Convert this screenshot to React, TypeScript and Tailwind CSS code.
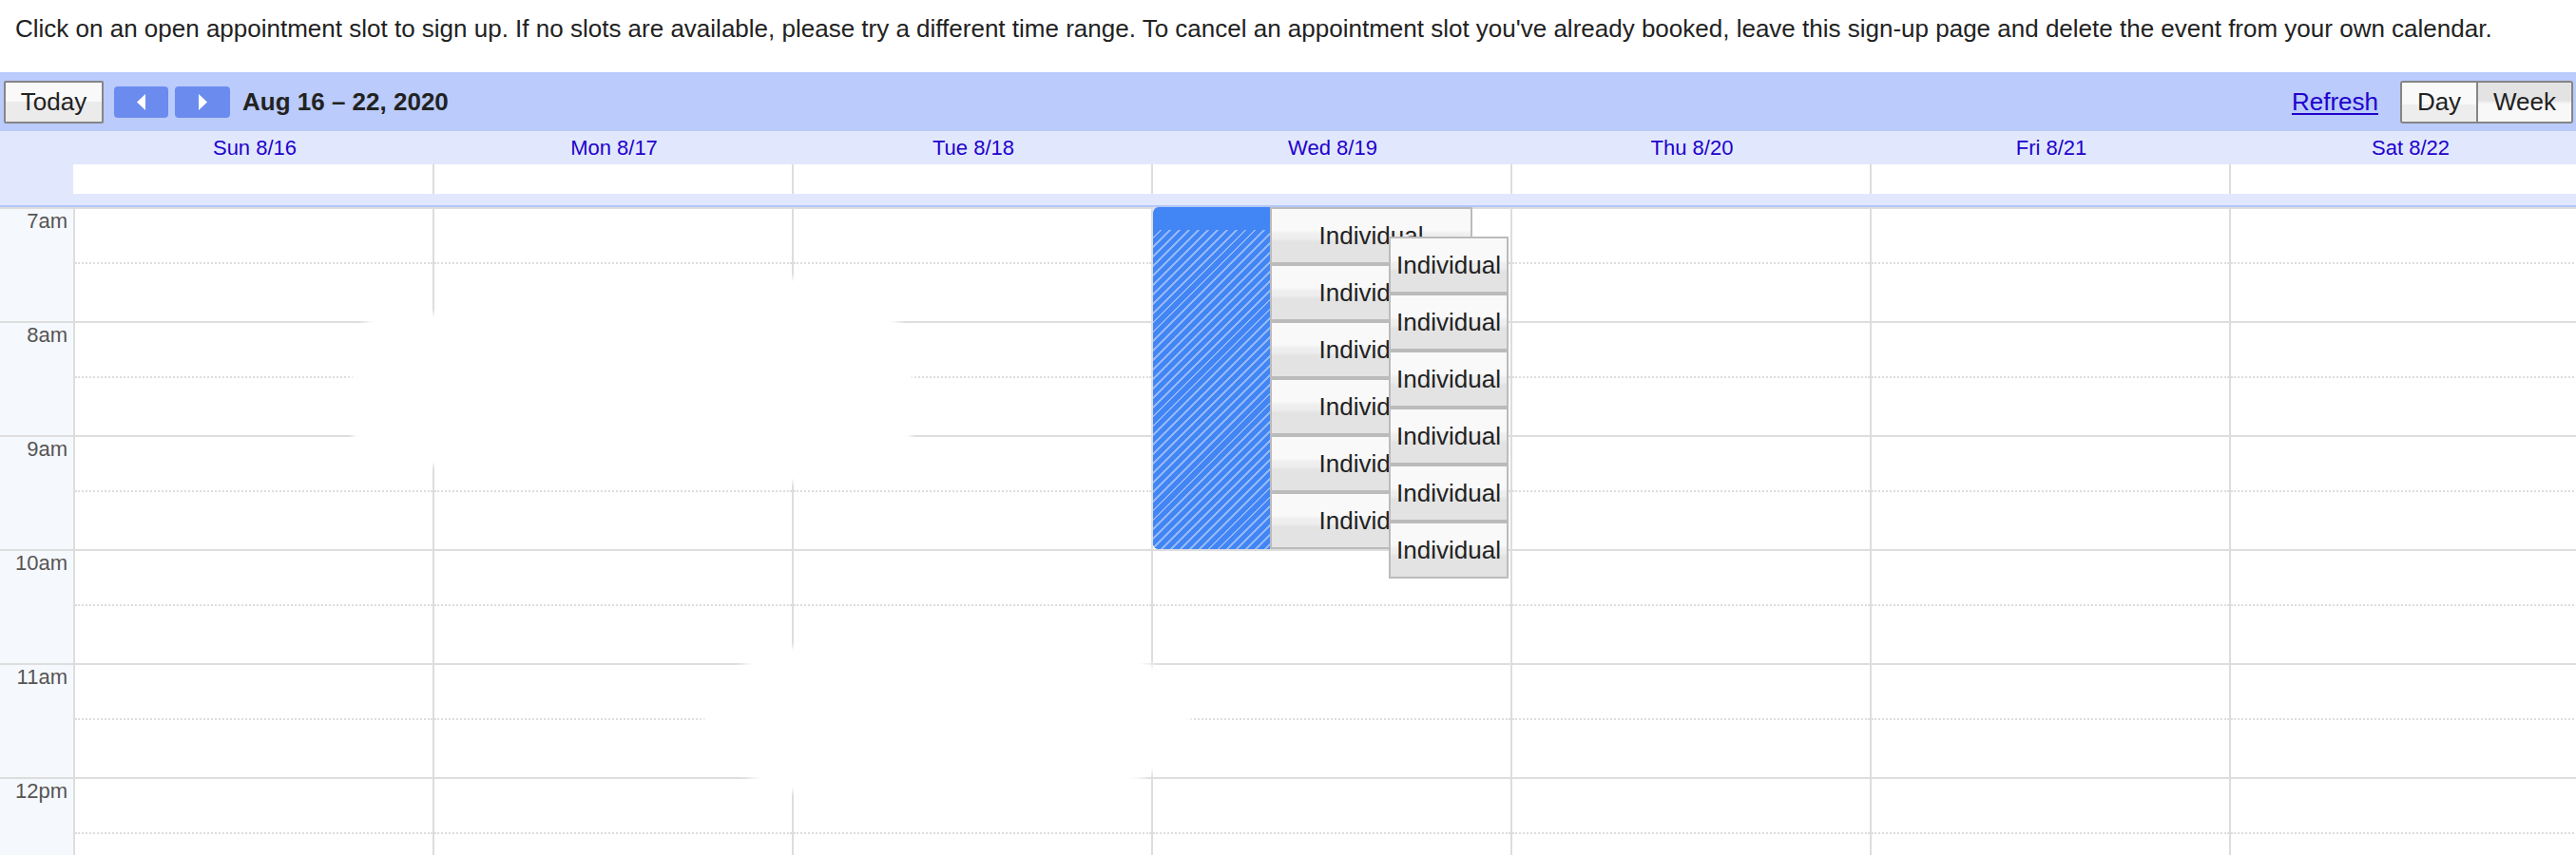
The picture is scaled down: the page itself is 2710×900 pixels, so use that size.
import React from "react";

const hours = ["7am", "8am", "9am", "10am", "11am", "12pm"];
const days = ["Sun 8/16", "Mon 8/17", "Tue 8/18", "Wed 8/19", "Thu 8/20", "Fri 8/21", "Sat 8/22"];

function SlotButton({ w }: { w: string }) {
  return (
    <div
      className={`${w} flex h-[60px] shrink-0 items-center justify-center overflow-hidden whitespace-nowrap border-2 border-[#bbbbbb] bg-[linear-gradient(#f9f9f9_0%,#f9f9f9_40%,#eeeeee_48%,#eeeeee_55%,#e3e3e3_62%,#e3e3e3_100%)] text-[26px] leading-[30px] text-[#222]`}
    >
      Individual
    </div>
  );
}

function DayColumn({ index }: { index: number }) {
  return (
    <div className="relative border-r-2 border-[#dddddd]">
      {hours.map((h) => (
        <div key={h} className="h-[120px] border-t-2 border-[#dddddd]">
          <div className="h-[58px] border-b-2 border-dotted border-[#dddddd]" />
        </div>
      ))}
      {index === 3 && (
        <>
          <div className="absolute left-0 top-0 flex h-[360px] w-[123px] flex-col overflow-hidden rounded-l-[6px] bg-[#4285f4]">
            <div className="h-[24px] shrink-0" />
            <div className="flex-1 bg-[image:repeating-linear-gradient(135deg,#4285f4_0px,#4285f4_5px,#93b8f8_5px,#93b8f8_7px)]" />
          </div>
          <div className="absolute left-[123px] top-0 flex flex-col">
            {[0, 1, 2, 3, 4, 5].map((i) => (
              <SlotButton key={i} w="w-[213px]" />
            ))}
          </div>
          <div className="absolute left-[248px] top-[31px] flex flex-col">
            {[0, 1, 2, 3, 4, 5].map((i) => (
              <SlotButton key={i} w="w-[126px]" />
            ))}
          </div>
        </>
      )}
    </div>
  );
}

export default function App() {
  return (
    <div className="h-[900px] w-full overflow-hidden bg-white font-['Liberation_Sans',Arial,sans-serif] text-[#222]">
      <div className="h-[76px] whitespace-nowrap pl-[16px] pt-[15px] text-[26px] leading-[30px] text-[#222]">
        Click on an open appointment slot to sign up. If no slots are available, please try a different time range. To cancel an appointment slot you've already booked, leave this sign-up page and delete the event from your own calendar.
      </div>

      <div className="flex h-[62px] items-center bg-[#bacbfc] pl-[4px] pr-[3px]">
        <div className="flex h-[45px] w-[105px] items-center justify-center rounded-[2px] border-2 border-[#858585] bg-[linear-gradient(#f9f9f9_0%,#f9f9f9_50%,#ebebeb_50%,#ebebeb_100%)] text-[26px] text-[#222]">
          Today
        </div>
        <div className="ml-[11px] flex h-[33px] w-[57px] items-center justify-center rounded-[4px] bg-[#6b8bee]">
          <svg width="11" height="17" viewBox="0 0 11 17">
            <polygon points="10,0 10,17 1,8.5" fill="#ffffff" />
          </svg>
        </div>
        <div className="ml-[7px] flex h-[33px] w-[58px] items-center justify-center rounded-[4px] bg-[#6b8bee]">
          <svg width="11" height="17" viewBox="0 0 11 17">
            <polygon points="1,0 1,17 10,8.5" fill="#ffffff" />
          </svg>
        </div>
        <div className="ml-[13px] text-[26px] font-bold text-[#222]">Aug 16 – 22, 2020</div>
        <div className="flex-1" />
        <span className="text-[26px] text-[#2200cc] underline decoration-[2px] underline-offset-[3px]">Refresh</span>
        <div className="ml-[23px] flex h-[45px] overflow-hidden rounded-[3px] border-2 border-[#858585]">
          <div className="flex w-[78px] items-center justify-center bg-[linear-gradient(#f9f9f9_0%,#f9f9f9_55%,#ededed_55%,#ededed_100%)] text-[26px] text-[#222]">
            Day
          </div>
          <div className="flex w-[100px] items-center justify-center border-l-2 border-[#858585] bg-[linear-gradient(#e3e3e3_0%,#e3e3e3_45%,#f8f8f8_55%,#f8f8f8_100%)] text-[26px] text-[#222]">
            Week
          </div>
        </div>
      </div>

      <div className="bg-[#e1e8fd]">
        <div className="grid h-[35px] grid-cols-[79px_repeat(7,378px)] items-center">
          <div />
          {days.map((d) => (
            <div key={d} className="text-center text-[22px] leading-[26px] text-[#2200cc]">
              {d}
            </div>
          ))}
        </div>
        <div className="grid h-[31px] grid-cols-[77px_2px_repeat(7,378px)]">
          <div />
          <div className="bg-white" />
          {days.map((d) => (
            <div key={d} className="border-r-2 border-[#dddddd] bg-white" />
          ))}
        </div>
        <div className="h-[12px]" />
        <div className="h-[2px] bg-[#b3c6fa]" />
      </div>

      <div className="relative grid grid-cols-[79px_repeat(7,378px)]">
        <div className="border-r-2 border-[#dddddd] bg-[#f5f8fc]">
          {hours.map((h) => (
            <div key={h} className="h-[120px] border-t-2 border-[#dddddd] pr-[6px] text-right text-[22px] leading-[26px] text-[#555]">
              {h}
            </div>
          ))}
        </div>
        {days.map((d, i) => (
          <DayColumn key={d} index={i} />
        ))}

        <div className="pointer-events-none absolute left-[370px] top-[112px] h-[160px] w-[590px] rounded-[40px] bg-white blur-[3px]" />
        <div className="pointer-events-none absolute left-[780px] top-[74px] h-[216px] w-[110px] rounded-[30px] bg-white blur-[3px]" />
        <div className="pointer-events-none absolute left-[740px] top-[458px] h-[162px] w-[512px] rounded-[140px/81px] bg-white blur-[3px]" />
      </div>
    </div>
  );
}
